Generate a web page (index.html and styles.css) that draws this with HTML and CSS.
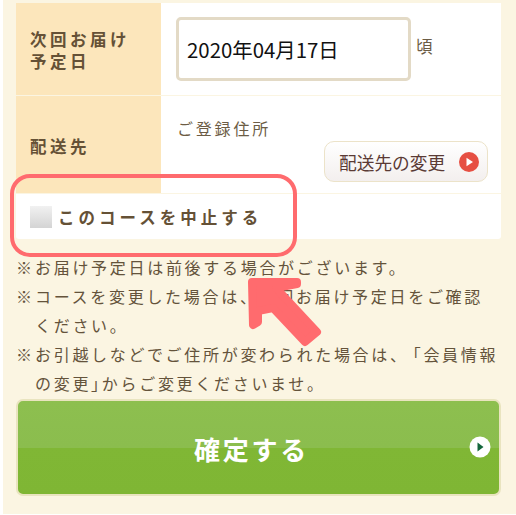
FILE: index.html

```html
<!DOCTYPE html>
<html lang="ja">
<head>
  <meta charset="UTF-8" />
  <meta name="viewport" content="width=device-width, initial-scale=1.0"/>
  <title>コース変更</title>
  <link rel="stylesheet" href="styles.css">
</head>
<body>
  <div class="page">
    <div class="card">
      <div class="row row-date">
        <div class="label">次回お届け<br>予定日</div>
        <div class="cell date-cell">
          <div class="date-input">2020年04月17日</div>
          <span class="suffix">頃</span>
        </div>
      </div>
      <div class="row row-address">
        <div class="label">配送先</div>
        <div class="cell address-cell">
          <p class="address">ご登録住所</p>
          <button class="change-btn">配送先の変更
            <svg class="change-icon" viewBox="0 0 20 20"><circle cx="10" cy="10" r="10" fill="#e64f43"/><path d="M7.5 5.8 14 10l-6.500 4.200z" fill="#fff"/></svg>
          </button>
        </div>
      </div>
      <label class="stop-row"><span class="check"></span>このコースを中止する</label>
    </div>

    <ul class="notes">
      <li>お届け予定日は前後する場合がございます。</li>
      <li>コースを変更した場合は、次回お届け予定日をご確認<br>ください。</li>
      <li>お引越しなどでご住所が変わられた場合は、<span class="bracket open">「</span>会員情報<br>の変更<span class="bracket">」</span>からご変更くださいませ。</li>
    </ul>

    <button class="submit">確定する
      <svg class="submit-icon" viewBox="0 0 22 22"><circle cx="11" cy="11" r="10.500" fill="#fff"/><path d="M8.500 6.500 14.500 11l-6 4.500z" fill="#14663c"/></svg>
    </button>

    <!-- annotation drawn over the screenshot -->
    <div class="highlight"></div>
    <svg class="arrow" viewBox="0 0 95 90"><path d="M17 17H62V19L41 23 82 67 70 77 38 43 23 46V57L18 60Z" fill="#ff6b6e" stroke="#ff6b6e" stroke-width="8" stroke-linejoin="round"/></svg>
  </div>
</body>
</html>
```

FILE: styles.css

```css
* {
  box-sizing: border-box;
}
body {
  margin: 0;
  background-color: #fff;
  font-family: "Noto Sans CJK JP", "Noto Sans", sans-serif;
  color: #5f4f38;
}
.page {
  position: relative;
  width: 513px;
  height: 514px;
  margin-left: 3px;
  padding: 2px 15px 0 13px;
  background-color: #fbf5e2;
  overflow: hidden;
}
.card {
  background-color: #fff;
  border-radius: 0 0 3px 3px;
}
.row {
  display: flex;
  border-top: 1px solid #fbf5e2;
}
.row-date {
  height: 93px;
}
.row-address {
  height: 98px;
}
.label {
  width: 145px;
  padding: 2px 0 0 14px;
  background-color: #fce6bb;
  font-size: 16.500px;
  font-weight: 700;
  line-height: 22px;
  letter-spacing: 3.500px;
  color: #655136;
  display: flex;
  align-items: center;
}
.cell {
  flex: 1;
}
.date-cell {
  display: flex;
  align-items: flex-start;
  padding: 14px 0 0 15px;
}
.date-input {
  width: 235px;
  height: 64px;
  padding-left: 8px;
  border: 3px solid #e3dac6;
  border-radius: 5px;
  font-size: 20.400px;
  line-height: 58px;
  color: #111;
}
.suffix {
  margin-left: 5px;
  font-size: 16.500px;
  line-height: 58px;
  height: 58px;
  color: #6c5c45;
}
.address-cell {
  padding: 21px 13px 0 16px;
}
.address {
  margin: 0;
  font-size: 16px;
  line-height: 22px;
  letter-spacing: 2.800px;
  color: #6c5c45;
}
.change-btn {
  display: flex;
  align-items: center;
  width: 164px;
  height: 41px;
  margin: 2px 0 0 auto;
  padding: 0 0 0 14px;
  border: 1px solid #ece3c9;
  border-radius: 10px;
  background: linear-gradient(#fff, #f3efee);
  font-family: inherit;
  font-size: 17.700px;
  color: #5a3a35;
}
.change-icon {
  width: 20px;
  height: 20px;
  margin-left: 14px;
}
.stop-row {
  display: flex;
  align-items: center;
  height: 46px;
  padding-left: 14px;
  border-top: 1px solid #fbf5e2;
  font-size: 16.500px;
  font-weight: 700;
  letter-spacing: 4px;
  color: #655136;
}
.check {
  width: 22px;
  height: 22px;
  margin-right: 6px;
  background: linear-gradient(#f1f1f1, #d4d4d4);
}
.notes {
  list-style: none;
  margin: 14px 0 0;
  padding: 0;
  font-size: 16px;
  line-height: 29px;
  letter-spacing: 2.700px;
  color: #64533b;
}
.notes li {
  position: relative;
  padding-left: 19px;
}
.notes li::before {
  content: "※";
  position: absolute;
  left: 0;
}
.bracket {
  font-feature-settings: "halt";
}
.bracket.open {
  margin-left: 4px;
}
.submit {
  position: relative;
  display: block;
  width: 485px;
  height: 97px;
  margin: 1px 0 0 0;
  padding: 2px 14px 0 0;
  border: 2px solid #e9e4bf;
  border-radius: 7px;
  background: linear-gradient(#8dbf4f 0, #8bbd4e 50%, #80b735 50%, #7fb634 100%);
  font-family: inherit;
  font-size: 26px;
  font-weight: 700;
  letter-spacing: 2.800px;
  color: #fff;
}
.submit-icon {
  position: absolute;
  right: 8px;
  top: 35px;
  width: 22px;
  height: 22px;
}
.highlight {
  position: absolute;
  left: 7px;
  top: 174px;
  width: 287px;
  height: 83px;
  border: 4px solid #ff6b6e;
  border-radius: 20px;
}
.arrow {
  position: absolute;
  left: 232px;
  top: 265px;
  width: 95px;
  height: 90px;
}
```
